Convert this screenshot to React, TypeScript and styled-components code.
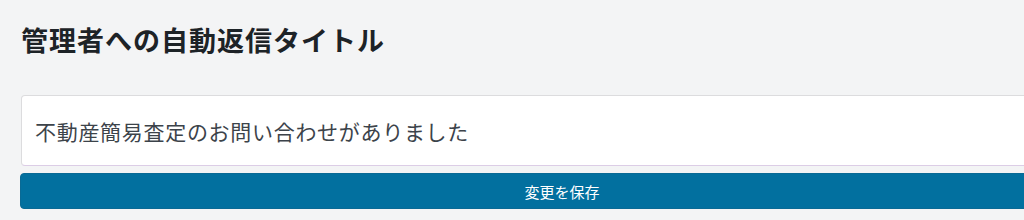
import React from 'react';
import styled, { createGlobalStyle } from 'styled-components';

const GlobalStyle = createGlobalStyle`
  html, body {
    margin: 0;
    padding: 0;
    overflow: hidden;
    background: #f3f4f5;
  }
  body {
    font-family: "Noto Sans CJK JP", "Noto Sans", sans-serif;
    color: #1d2327;
  }
`;

const Page = styled.div`
  width: 1084px;
  padding: 22px 0 0 20px;
`;

const Title = styled.h2`
  margin: 0 0 37px 1px;
  font-size: 27px;
  line-height: 36px;
  font-weight: 700;
  color: #1d2327;
  letter-spacing: 1px;
`;

const Field = styled.input`
  display: block;
  box-sizing: border-box;
  width: calc(100% - 1px);
  height: 71px;
  margin: 0 0 7px 1px;
  padding: 0 13px;
  border: 1px solid #dcdcde;
  border-bottom-color: #dccde6;
  border-radius: 4px;
  background: #fff;
  font-family: inherit;
  font-size: 21px;
  letter-spacing: 0.7px;
  color: #3c434a;
  outline: none;
`;

const SaveButton = styled.button`
  display: block;
  width: 100%;
  height: 36px;
  border: 1px solid #0a6a95;
  border-radius: 4px;
  background: #02709f;
  color: #fff;
  font-family: inherit;
  font-size: 15px;
  cursor: pointer;
`;

export default function App() {
  return (
    <>
      <GlobalStyle />
      <Page>
        <Title>管理者への自動返信タイトル</Title>
        <Field defaultValue="不動産簡易査定のお問い合わせがありました" />
        <SaveButton>変更を保存</SaveButton>
      </Page>
    </>
  );
}
